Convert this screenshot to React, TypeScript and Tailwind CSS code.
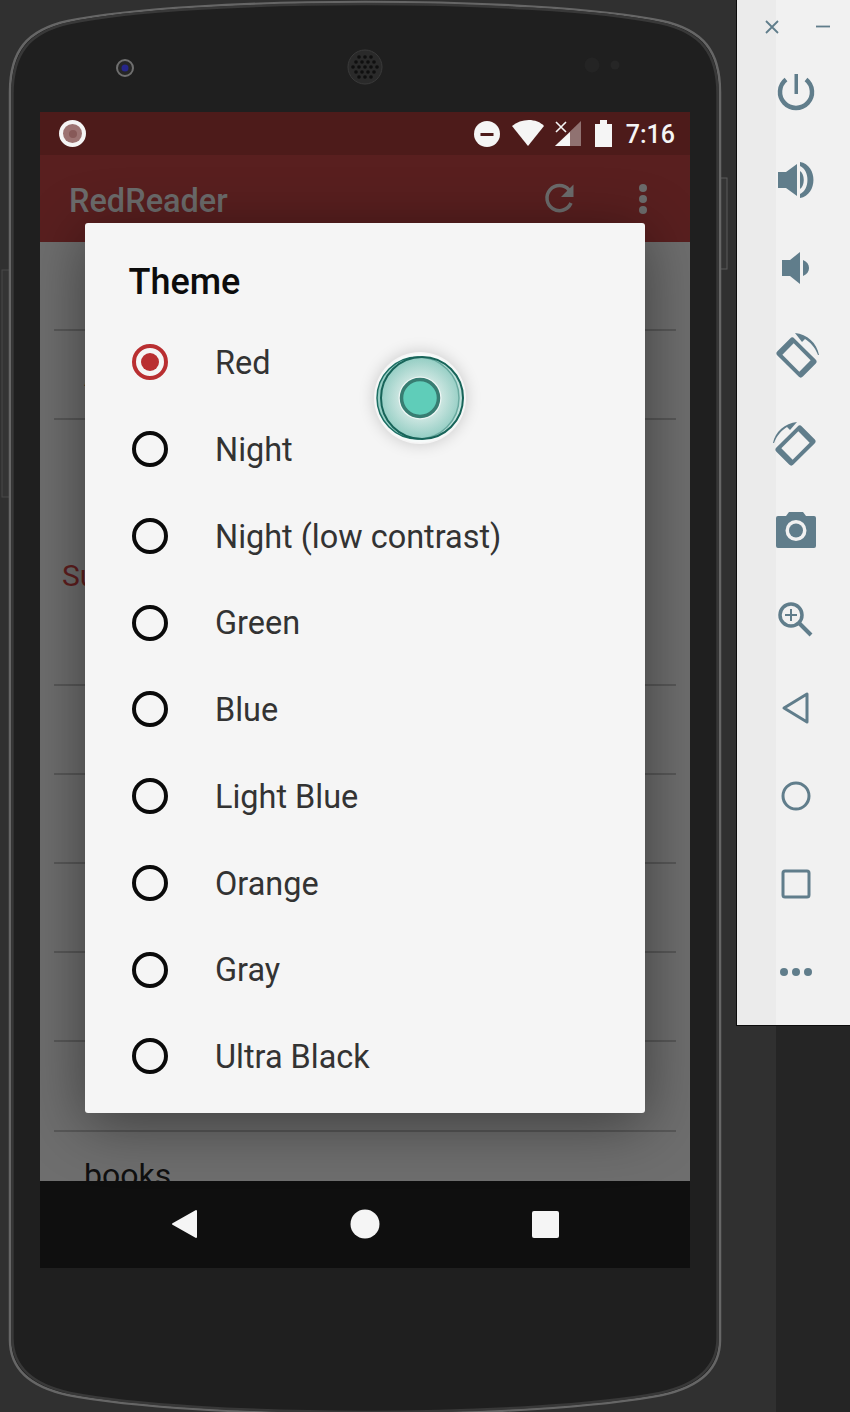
import React from "react";

const roboto = { fontFamily: "Roboto, sans-serif" };
const themes = ["Red", "Night", "Night (low contrast)", "Green", "Blue", "Light Blue", "Orange", "Gray", "Ultra Black"];

function PhoneBody() {
  const d = "M10 92 C10 52 26 30 68 21 C130 8 250 2 365 2 C480 2 600 8 662 21 C704 30 720 52 720 92 L720 1340 C720 1366 704 1386 662 1395 C600 1407 480 1414 365 1414 C250 1414 130 1407 68 1395 C26 1386 10 1366 10 1340 Z";
  return (
    <svg className="absolute left-0 top-0" width="776" height="1412" viewBox="0 0 776 1412">
      <rect x="2" y="270" width="8" height="227" fill="#343434" stroke="#484848" />
      <rect x="720" y="178" width="7" height="91" fill="#343434" stroke="#5a5a5a" />
      <path d={d} fill="#1f1f1f" stroke="#666666" strokeWidth="2.5" />
      <path d={d} fill="none" stroke="#383838" strokeWidth="2.5" transform="translate(365 706) scale(0.993 0.997) translate(-365 -706)" />
      <circle cx="125" cy="68" r="8" fill="#262626" stroke="#6f6f6f" strokeWidth="2" />
      <circle cx="125" cy="68" r="3.5" fill="#26268a" />
      <circle cx="365" cy="67" r="17" fill="#2a2a2a" stroke="#3a3a3a" />
      <g fill="#0f0f0f">
        {[[0,0],[-6,0],[6,0],[-12,0],[12,0],[-3,-5],[3,-5],[-9,-5],[9,-5],[-3,5],[3,5],[-9,5],[9,5],[0,-10],[-6,-10],[6,-10],[0,10],[-6,10],[6,10]].map(([x, y], i) => (
          <circle key={i} cx={365 + x} cy={67 + y} r="1.8" />
        ))}
      </g>
      <circle cx="592" cy="65" r="7.5" fill="#242424" />
      <circle cx="615" cy="65" r="4.5" fill="#262626" />
    </svg>
  );
}

function StatusIcons() {
  return (
    <svg width="140" height="30" viewBox="0 0 140 30" className="shrink-0">
      <circle cx="14" cy="15" r="13" fill="#f5f5f5" />
      <rect x="7.500" y="14" width="13" height="3" fill="#4d1b1a" />
      <path d="M39 7 C48 -1 64 -1 71 7 L55 27 Z" fill="#f5f5f5" />
      <path d="M82 27 L108 2 L108 27 Z" fill="#f5f5f5" fillOpacity="0.4" />
      <path d="M82 27 L97 13 L97 27 Z" fill="#f5f5f5" />
      <path d="M83 3 L93 13 M93 3 L83 13" stroke="#f5f5f5" strokeWidth="1.6" />
      <path d="M122 5 H127 V1 H134 V5 H139 V28 H122 Z" fill="#f5f5f5" />
    </svg>
  );
}

function TouchPoint() {
  return (
    <div className="absolute left-[289px] top-[129px] h-[92px] w-[92px] rounded-full shadow-[0_0_16px_rgba(0,0,0,0.18)]">
      <svg width="92" height="92" viewBox="0 0 92 92">
        <defs>
          <radialGradient id="halo" cx="50%" cy="50%" r="50%">
            <stop offset="30%" stopColor="#e3f0ed" />
            <stop offset="100%" stopColor="#93cdc3" />
          </radialGradient>
        </defs>
        <circle cx="46" cy="46" r="44.500" fill="#f6fbfa" />
        <circle cx="44" cy="46" r="41" fill="url(#halo)" stroke="#1c6e63" strokeWidth="1.500" />
        <circle cx="48" cy="46" r="41" fill="url(#halo)" fillOpacity="0.6" stroke="#176459" strokeWidth="2" />
        <circle cx="46" cy="46" r="21.500" fill="#eef7f5" />
        <circle cx="46" cy="46" r="18.500" fill="#5fcdb9" stroke="#377d72" strokeWidth="3.500" />
      </svg>
    </div>
  );
}

function Ico({ children }: { children: React.ReactNode }) {
  return <svg width="48" height="48" viewBox="0 0 48 48" fill="#607d8b" stroke="none">{children}</svg>;
}

const sideIcons: React.ReactNode[] = [
  <Ico key="p">
    <path d="M14 11.500 A16 16 0 1 0 34 11.500" fill="none" stroke="#607d8b" strokeWidth="4.500" />
    <rect x="22.500" y="6" width="3.500" height="20" />
  </Ico>,
  <Ico key="v+">
    <path d="M6 16 H14 L25 8 V40 L14 32 H6 Z" />
    <path d="M28 15 C33 18 33 30 28 33 Z" />
    <path d="M28 6 C46 9 46 39 28 42 L28 38 C38 34 38 14 28 10 Z" />
  </Ico>,
  <Ico key="v-">
    <path d="M10 16 H18 L28 8 V40 L18 32 H10 Z" />
    <path d="M31 16 C39 19 39 29 31 32 Z" />
  </Ico>,
  <Ico key="r1">
    <g transform="rotate(-45 24.500 25.500)">
      <rect x="12.500" y="7.500" width="24" height="36" rx="3" />
      <rect x="16.500" y="13.500" width="16" height="24" fill="#f1f1f1" />
    </g>
    <path d="M23 1 C35 2 45 11 47 23 L46 23 C43 15 38 10 33 7 L30 10 Z" />
  </Ico>,
  <Ico key="r2">
    <g transform="rotate(45 23.500 25.500)">
      <rect x="11.500" y="7.500" width="24" height="36" rx="3" />
      <rect x="15.500" y="13.500" width="16" height="24" fill="#f1f1f1" />
    </g>
    <path d="M25 2 C13 3 3 12 1 23 L2 23 C5 15 10 10 15 7 L18 10 Z" />
  </Ico>,
  <Ico key="c">
    <path fillRule="evenodd" d="M6 8 H14 L17 4 H31 L34 8 H42 A2 2 0 0 1 44 10 V38 A2 2 0 0 1 42 40 H6 A2 2 0 0 1 4 38 V10 A2 2 0 0 1 6 8 Z M24 12 A10.500 10.500 0 1 0 24 33 A10.500 10.500 0 0 0 24 12 Z" />
    <circle cx="24" cy="22.500" r="7" />
  </Ico>,
  <Ico key="z">
    <circle cx="19" cy="19" r="11" fill="none" stroke="#607d8b" strokeWidth="3.500" />
    <path d="M27 27 L39 39" stroke="#607d8b" strokeWidth="4" />
    <path d="M13 19 H25 M19 13 V25" stroke="#607d8b" strokeWidth="2" />
  </Ico>,
  <Ico key="b">
    <path d="M35 10 V38 L12 24 Z" fill="none" stroke="#607d8b" strokeWidth="3" strokeLinejoin="round" />
  </Ico>,
  <Ico key="o">
    <circle cx="24" cy="24" r="13" fill="none" stroke="#607d8b" strokeWidth="3" />
  </Ico>,
  <Ico key="s">
    <rect x="11" y="11" width="26" height="26" rx="2" fill="none" stroke="#607d8b" strokeWidth="3" />
  </Ico>,
  <Ico key="m">
    <circle cx="12" cy="24" r="4" />
    <circle cx="24" cy="24" r="4" />
    <circle cx="36" cy="24" r="4" />
  </Ico>,
];

function ListRow({ h = "h-[89px]", children }: { h?: string; children?: React.ReactNode }) {
  return (
    <div className={`${h} mx-[14px] flex items-center border-b-2 border-[#585858] pl-[30px] text-[32px] text-[#101010]`}>
      {children}
    </div>
  );
}

export default function App() {
  return (
    <div className="relative h-[1412px] w-[850px] overflow-hidden bg-[#252525]" style={roboto}>
      <div className="absolute left-0 top-0 h-full w-[776px] bg-[#303030]" />
      <PhoneBody />

      <div className="absolute left-[40px] top-[112px] flex h-[1156px] w-[650px] flex-col overflow-hidden bg-[#6e6e6e]">
        <div className="flex h-[43px] shrink-0 items-center justify-between bg-[#4d1b1a] pl-[19px] pr-[15px]">
          <div className="flex h-[27px] w-[27px] items-center justify-center rounded-full bg-[#f5f5f5]">
            <div className="flex h-[19px] w-[19px] items-center justify-center rounded-full bg-[#9c7372]">
              <div className="h-[8px] w-[8px] rounded-full bg-[#875958]" />
            </div>
          </div>
          <div className="flex items-center gap-[13px]">
            <StatusIcons />
            <span className="pt-[2px] text-[25px] font-medium leading-none text-[#f5f5f5]">7:16</span>
          </div>
        </div>

        <div className="flex h-[87px] shrink-0 items-center justify-between bg-[#591f1f] pl-[29px] pr-[43px]">
          <span className="pt-[6px] text-[32.500px] font-medium leading-none text-[#6c6c6c]">RedReader</span>
          <div className="flex items-center gap-[63px]">
            <svg width="32" height="32" viewBox="0 0 32 32">
              <path d="M27 20 A12.500 12.500 0 1 1 25 7" fill="none" stroke="#6c6c6c" strokeWidth="3.500" />
              <path d="M29.500 1.500 V14 H17 Z" fill="#6c6c6c" />
            </svg>
            <div className="flex flex-col gap-[3px]">
              <span className="h-[8px] w-[8px] rounded-full bg-[#6c6c6c]" />
              <span className="h-[8px] w-[8px] rounded-full bg-[#6c6c6c]" />
              <span className="h-[8px] w-[8px] rounded-full bg-[#6c6c6c]" />
            </div>
          </div>
        </div>

        <div className="relative min-h-0 flex-1 overflow-hidden">
          <ListRow />
          <ListRow>All</ListRow>
          <div className="mx-[14px] flex h-[266px] items-end border-b-2 border-[#585858] pb-[93px] pl-[8px] text-[30px] leading-none text-[#5f1e1e]">Subreddits</div>
          <ListRow />
          <ListRow />
          <ListRow />
          <ListRow />
          <ListRow h="h-[90px]" />
          <div className="pl-[44px] pt-[23px] text-[32px] leading-[40px] text-[#101010]">books</div>
        </div>

        <div className="flex h-[87px] shrink-0 items-center bg-[#0f0f0f]">
          <svg width="650" height="87" viewBox="0 0 650 87">
            <path d="M156 30 V56 L133 43 Z" fill="#f5f5f5" stroke="#f5f5f5" strokeWidth="2" strokeLinejoin="round" />
            <circle cx="325" cy="43" r="14.500" fill="#f5f5f5" />
            <rect x="492" y="30" width="27" height="27" rx="2" fill="#f5f5f5" />
          </svg>
        </div>

        <div className="absolute left-[45px] top-[111px] h-[890px] w-[560px] rounded-[3px] bg-[#f5f5f5] pt-[39px] shadow-[0_10px_60px_rgba(0,0,0,0.45)]">
          <div className="pl-[43.500px] text-[36px] font-medium leading-[40px] text-[#0c0c0c]">Theme</div>
          <div className="mt-[17px] flex flex-col">
            {themes.map((t, i) => (
              <div key={t} className="flex h-[86.750px] items-center gap-[47px] pl-[47px]">
                {i === 0 ? (
                  <div className="flex h-[36px] w-[36px] items-center justify-center rounded-full border-[4px] border-[#b92f31]">
                    <div className="h-[18px] w-[18px] rounded-full bg-[#b92f31]" />
                  </div>
                ) : (
                  <div className="h-[36px] w-[36px] rounded-full border-[4px] border-[#0a0a0a]" />
                )}
                <span className="pt-[2px] text-[32.450px] leading-none text-[#333333]">{t}</span>
              </div>
            ))}
          </div>
          <TouchPoint />
        </div>
      </div>

      <div className="absolute right-0 top-0 flex h-[1026px] w-[114px] border-b border-l border-[#0c0c0c] bg-[#f1f1f1]">
        <div className="w-[39px] shrink-0 bg-[#ebebeb]" />
        <div className="absolute left-0 top-0 flex w-full flex-col items-center">
          <div className="flex h-[48px] w-full items-start gap-[35px] pl-[27px] pt-[19px]">
            <svg width="16" height="16" viewBox="0 0 16 16"><path d="M2 2 L14 14 M14 2 L2 14" stroke="#607d8b" strokeWidth="1.800" /></svg>
            <svg width="16" height="16" viewBox="0 0 16 16"><path d="M1 7.500 H15" stroke="#607d8b" strokeWidth="1.800" /></svg>
          </div>
          <div className="flex flex-col pl-[4px]">
            {sideIcons.map((ic, i) => (
              <div key={i} className="flex h-[88px] w-[48px] items-center justify-center">{ic}</div>
            ))}
          </div>
        </div>
      </div>
    </div>
  );
}
